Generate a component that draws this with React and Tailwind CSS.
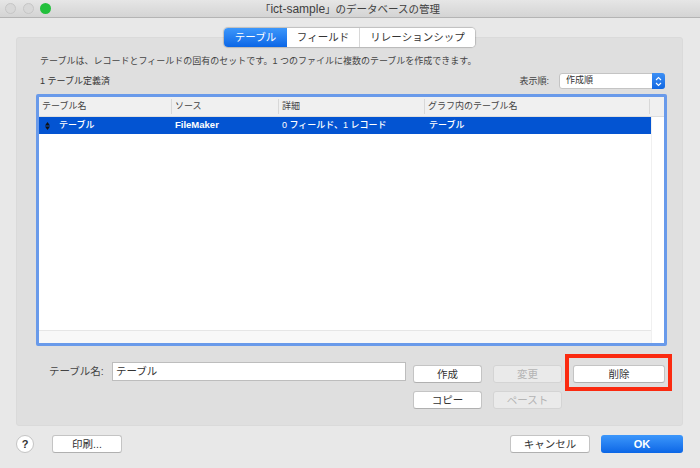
const jp = "font-['Liberation_Sans','Noto_Sans_CJK_JP',sans-serif]";

function Btn({ children, className = "", disabled }) {
  return (
    <div
      className={`flex items-center justify-center h-[18px] rounded-[3px] text-[10.5px] leading-none ${
        disabled
          ? "bg-[#eaeaea] border border-[#d4d4d4] text-[#b4b4b4]"
          : "bg-white border border-[#c4c4c4] border-b-[#b0b0b0] text-[#333]"
      } ${className}`}
    >
      {children}
    </div>
  );
}

function Tab({ children, active, className = "" }) {
  return (
    <div
      className={`flex items-center justify-center h-full text-[10.5px] leading-none ${
        active
          ? "bg-gradient-to-b from-[#3c97fb] to-[#0a66e6] text-white rounded-l-[4px]"
          : "bg-white text-[#333]"
      } ${className}`}
    >
      {children}
    </div>
  );
}

export default function App() {
  return (
    <div className={`${jp} w-[700px] h-[468px] bg-[#e8e8e8] flex flex-col overflow-hidden`}>
      {/* title bar */}
      <div className="relative h-[18px] shrink-0 bg-gradient-to-b from-[#e6e6e6] to-[#d4d4d4] border-b border-[#b4b4b4] flex items-center justify-center">
        <div className="absolute left-[5px] top-[3px] flex gap-[6.5px]">
          <span className="w-[11px] h-[11px] rounded-full bg-[#d8d8d8] border border-[#c6c6c6]" />
          <span className="w-[11px] h-[11px] rounded-full bg-[#d8d8d8] border border-[#c6c6c6]" />
          <span className="w-[11px] h-[11px] rounded-full bg-[#22c03c]" />
        </div>
        <span className="text-[10.5px] leading-none text-[#404040]">
          「<span className="text-[12px]">ict-sample</span>」のデータベースの管理
        </span>
      </div>

      {/* main panel */}
      <div className="ml-[16px] w-[667px] mt-[19px] h-[389px] bg-[#dfdfdf] rounded-[3px] border border-[#dadada] pl-[19px] flex flex-col">
        <div className="-mt-[10px] ml-[188px] flex h-[19px] w-[251px] shrink-0 rounded-[4px] bg-white shadow-[0_0_1px_1px_rgba(0,0,0,0.18)]">
          <Tab active className="w-[63px]">テーブル</Tab>
          <Tab className="w-[73px] border-r border-[#d8d8d8]">フィールド</Tab>
          <Tab className="flex-1 rounded-r-[4px]">リレーションシップ</Tab>
        </div>

        <p className="mt-[8px] ml-[4px] text-[9px] leading-[12px] text-[#444]">
          テーブルは、レコードとフィールドの固有のセットです。1 つのファイルに複数のテーブルを作成できます。
        </p>

        <div className="mt-[3px] w-[631px] h-[20px] flex items-center justify-between">
          <span className="ml-[4px] mt-[3px] text-[9px] text-[#333]">1 テーブル定義済</span>
          <div className="flex items-center mr-[2px] mt-[2px]">
            <span className="text-[9px] text-[#444] mr-[10px] mt-[1px]">表示順:</span>
            <div className="relative flex items-center w-[106px] h-[16px] bg-white rounded-[3px] border border-[#c4c4c4] pl-[6px] text-[9px] text-[#333]">
              作成順
              <div className="absolute -right-px -top-px -bottom-px w-[13px] bg-gradient-to-b from-[#3c8ff5] to-[#0f67e2] rounded-r-[3px] flex items-center justify-center">
                <svg width="7" height="11" viewBox="0 0 7 11" fill="none" stroke="white" strokeWidth="1.1">
                  <path d="M1 4 L3.5 1.5 L6 4" />
                  <path d="M1 7 L3.5 9.5 L6 7" />
                </svg>
              </div>
            </div>
          </div>
        </div>

        {/* table */}
        <div className="mt-[4px] w-[631px] h-[252px] border-[3px] border-[#699aea] rounded-[2px] bg-white flex flex-col shrink-0">
          <div className="h-[20px] bg-[#f0f0f0] border-b border-[#dedede] flex items-center text-[9px] text-[#444] shrink-0">
            <div className="w-[133px] pl-[3px] pt-[1px] border-r border-[#d8d8d8] h-[15px] flex items-center">テーブル名</div>
            <div className="w-[107px] pl-[3px] pt-[1px] border-r border-[#d8d8d8] h-[15px] flex items-center">ソース</div>
            <div className="w-[146px] pl-[3px] pt-[1px] border-r border-[#d8d8d8] h-[15px] flex items-center">詳細</div>
            <div className="w-[225px] pl-[3px] pt-[1px] border-r border-[#d8d8d8] h-[15px] flex items-center">グラフ内のテーブル名</div>
          </div>
          <div className="flex-1 flex min-h-0">
            <div className="flex-1 flex flex-col">
              <div className="h-[17px] bg-[#0354d2] flex items-center text-[9px] font-medium text-white">
                <div className="w-[133px] flex items-center">
                  <svg className="ml-[6px] mr-[9px]" width="5" height="8" viewBox="0 0 5 8" fill="#111">
                    <path d="M2.5 0 L5 3.4 H0 Z" />
                    <path d="M2.5 8 L5 4.6 H0 Z" />
                  </svg>
                  テーブル
                </div>
                <div className="w-[107px] pl-[3px] text-[9.5px] font-semibold">FileMaker</div>
                <div className="w-[146px] pl-[3px]">0 フィールド、1 レコード</div>
                <div className="pl-[4px]">テーブル</div>
              </div>
              <div className="flex-1" />
              <div className="h-[13px] bg-[#f8f8f8] border-t border-[#e6e6e6]" />
            </div>
            <div className="w-[13px] bg-white border-l border-[#f0f0f0]" />
          </div>
        </div>

        {/* name row and buttons */}
        <div className="mt-[16px] flex">
          <div className="ml-[13px] w-[357px] flex items-start">
            <span className="w-[63px] text-[10.5px] leading-[19px] text-[#444] shrink-0">テーブル名:</span>
            <div className="w-[294px] h-[19px] bg-white border border-[#bdbdbd] pl-[3px] text-[10.5px] leading-[16px] text-[#333]">
              テーブル
            </div>
          </div>
          <div className="ml-[7px] mt-[3px] grid grid-cols-[69px_69px] gap-x-[11px] gap-y-[8px]">
            <Btn>作成</Btn>
            <Btn disabled>変更</Btn>
            <Btn>コピー</Btn>
            <Btn disabled>ペースト</Btn>
          </div>
          <div className="relative ml-[11px] mt-[3px] w-[92px] h-[18px]">
            <Btn className="w-full">削除</Btn>
            <div className="absolute -left-[8px] -right-[7px] -top-[11px] -bottom-[8px] border-[4px] border-[#fb2a10]" />
          </div>
        </div>
      </div>

      {/* footer */}
      <div className="mt-[9px] ml-[16px] w-[667px] flex items-center">
        <div className="w-[18px] h-[18px] rounded-full bg-white border border-[#c4c4c4] flex items-center justify-center text-[11px] font-bold leading-none text-[#333]">
          ?
        </div>
        <Btn className="ml-[18px] w-[70px]">印刷...</Btn>
        <Btn className="ml-auto w-[80px] text-[#222]">キャンセル</Btn>
        <div className="ml-[11px] w-[82px] h-[18px] pt-[1px] rounded-[3px] bg-gradient-to-b from-[#3c97fb] to-[#0a66e6] text-white text-[11px] font-semibold leading-none flex items-center justify-center">
          OK
        </div>
      </div>
    </div>
  );
}
